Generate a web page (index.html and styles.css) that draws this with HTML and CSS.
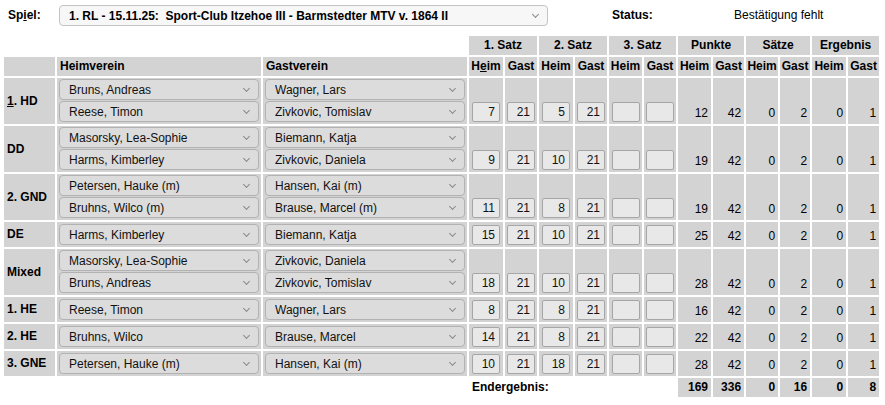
FILE: index.html
```html
<!DOCTYPE html>
<html>
	<head>
		<meta charset="utf-8">
		<title>Spielbericht</title>
		<link rel="stylesheet" href="styles.css">
	</head>
	<body>
		<div class="kopf">
			<label class="kopf-label" accesskey="i">Sp<u>i</u>el:</label>
			<span class="pick pick-spiel">
				<select>
					<option>1. RL - 15.11.25:&nbsp; Sport-Club Itzehoe III - Barmstedter MTV v. 1864 II</option>
				</select>
			</span>
			<span class="status-label">Status:</span>
			<span class="status">Bestätigung fehlt</span>
		</div>

		<table class="bericht">
			<colgroup>
				<col class="c-rang"><col class="c-name"><col class="c-name">
				<col class="c-34"><col class="c-32"><col class="c-34"><col class="c-32">
				<col class="c-33"><col class="c-32"><col class="c-33"><col class="c-31">
				<col class="c-32"><col class="c-30"><col class="c-34"><col class="c-31">
			</colgroup>
			<thead>
				<tr>
					<th colspan="3" class="leer"></th>
					<th colspan="2">1. Satz</th>
					<th colspan="2">2. Satz</th>
					<th colspan="2">3. Satz</th>
					<th colspan="2">Punkte</th>
					<th colspan="2">Sätze</th>
					<th colspan="2">Ergebnis</th>
				</tr>
				<tr>
					<th></th>
					<th class="links">Heimverein</th>
					<th class="links">Gastverein</th>
					<th>H<u>e</u>im</th><th>Gast</th>
					<th>Heim</th><th>Gast</th>
					<th>Heim</th><th>Gast</th>
					<th>Heim</th><th>Gast</th>
					<th>Heim</th><th>Gast</th>
					<th>Heim</th><th>Gast</th>
				</tr>
			</thead>
			<tbody>
				<tr class="doppel">
					<td class="rang"><u>1</u>. HD</td>
					<td class="namen">
						<span class="pick"><select><option>Bruns, Andreas</option></select></span>
						<span class="pick"><select><option>Reese, Timon</option></select></span>
					</td>
					<td class="namen">
						<span class="pick"><select><option>Wagner, Lars</option></select></span>
						<span class="pick"><select><option>Zivkovic, Tomislav</option></select></span>
					</td>
					<td class="satz"><input value="7"></td><td class="satz"><input value="21"></td>
					<td class="satz"><input value="5"></td><td class="satz"><input value="21"></td>
					<td class="satz"><input value=""></td><td class="satz"><input value=""></td>
					<td class="zahl">12</td><td class="zahl">42</td>
					<td class="zahl">0</td><td class="zahl">2</td>
					<td class="zahl">0</td><td class="zahl">1</td>
				</tr>
				<tr class="doppel">
					<td class="rang">DD</td>
					<td class="namen">
						<span class="pick"><select><option>Masorsky, Lea-Sophie</option></select></span>
						<span class="pick"><select><option>Harms, Kimberley</option></select></span>
					</td>
					<td class="namen">
						<span class="pick"><select><option>Biemann, Katja</option></select></span>
						<span class="pick"><select><option>Zivkovic, Daniela</option></select></span>
					</td>
					<td class="satz"><input value="9"></td><td class="satz"><input value="21"></td>
					<td class="satz"><input value="10"></td><td class="satz"><input value="21"></td>
					<td class="satz"><input value=""></td><td class="satz"><input value=""></td>
					<td class="zahl">19</td><td class="zahl">42</td>
					<td class="zahl">0</td><td class="zahl">2</td>
					<td class="zahl">0</td><td class="zahl">1</td>
				</tr>
				<tr class="doppel">
					<td class="rang">2. GND</td>
					<td class="namen">
						<span class="pick"><select><option>Petersen, Hauke (m)</option></select></span>
						<span class="pick"><select><option>Bruhns, Wilco (m)</option></select></span>
					</td>
					<td class="namen">
						<span class="pick"><select><option>Hansen, Kai (m)</option></select></span>
						<span class="pick"><select><option>Brause, Marcel (m)</option></select></span>
					</td>
					<td class="satz"><input value="11"></td><td class="satz"><input value="21"></td>
					<td class="satz"><input value="8"></td><td class="satz"><input value="21"></td>
					<td class="satz"><input value=""></td><td class="satz"><input value=""></td>
					<td class="zahl">19</td><td class="zahl">42</td>
					<td class="zahl">0</td><td class="zahl">2</td>
					<td class="zahl">0</td><td class="zahl">1</td>
				</tr>
				<tr>
					<td class="rang">DE</td>
					<td class="namen"><span class="pick"><select><option>Harms, Kimberley</option></select></span></td>
					<td class="namen"><span class="pick"><select><option>Biemann, Katja</option></select></span></td>
					<td class="satz"><input value="15"></td><td class="satz"><input value="21"></td>
					<td class="satz"><input value="10"></td><td class="satz"><input value="21"></td>
					<td class="satz"><input value=""></td><td class="satz"><input value=""></td>
					<td class="zahl">25</td><td class="zahl">42</td>
					<td class="zahl">0</td><td class="zahl">2</td>
					<td class="zahl">0</td><td class="zahl">1</td>
				</tr>
				<tr class="doppel">
					<td class="rang">Mixed</td>
					<td class="namen">
						<span class="pick"><select><option>Masorsky, Lea-Sophie</option></select></span>
						<span class="pick"><select><option>Bruns, Andreas</option></select></span>
					</td>
					<td class="namen">
						<span class="pick"><select><option>Zivkovic, Daniela</option></select></span>
						<span class="pick"><select><option>Zivkovic, Tomislav</option></select></span>
					</td>
					<td class="satz"><input value="18"></td><td class="satz"><input value="21"></td>
					<td class="satz"><input value="10"></td><td class="satz"><input value="21"></td>
					<td class="satz"><input value=""></td><td class="satz"><input value=""></td>
					<td class="zahl">28</td><td class="zahl">42</td>
					<td class="zahl">0</td><td class="zahl">2</td>
					<td class="zahl">0</td><td class="zahl">1</td>
				</tr>
				<tr>
					<td class="rang">1. HE</td>
					<td class="namen"><span class="pick"><select><option>Reese, Timon</option></select></span></td>
					<td class="namen"><span class="pick"><select><option>Wagner, Lars</option></select></span></td>
					<td class="satz"><input value="8"></td><td class="satz"><input value="21"></td>
					<td class="satz"><input value="8"></td><td class="satz"><input value="21"></td>
					<td class="satz"><input value=""></td><td class="satz"><input value=""></td>
					<td class="zahl">16</td><td class="zahl">42</td>
					<td class="zahl">0</td><td class="zahl">2</td>
					<td class="zahl">0</td><td class="zahl">1</td>
				</tr>
				<tr>
					<td class="rang">2. HE</td>
					<td class="namen"><span class="pick"><select><option>Bruhns, Wilco</option></select></span></td>
					<td class="namen"><span class="pick"><select><option>Brause, Marcel</option></select></span></td>
					<td class="satz"><input value="14"></td><td class="satz"><input value="21"></td>
					<td class="satz"><input value="8"></td><td class="satz"><input value="21"></td>
					<td class="satz"><input value=""></td><td class="satz"><input value=""></td>
					<td class="zahl">22</td><td class="zahl">42</td>
					<td class="zahl">0</td><td class="zahl">2</td>
					<td class="zahl">0</td><td class="zahl">1</td>
				</tr>
				<tr>
					<td class="rang">3. GNE</td>
					<td class="namen"><span class="pick"><select><option>Petersen, Hauke (m)</option></select></span></td>
					<td class="namen"><span class="pick"><select><option>Hansen, Kai (m)</option></select></span></td>
					<td class="satz"><input value="10"></td><td class="satz"><input value="21"></td>
					<td class="satz"><input value="18"></td><td class="satz"><input value="21"></td>
					<td class="satz"><input value=""></td><td class="satz"><input value=""></td>
					<td class="zahl">28</td><td class="zahl">42</td>
					<td class="zahl">0</td><td class="zahl">2</td>
					<td class="zahl">0</td><td class="zahl">1</td>
				</tr>
				<tr class="summe">
					<td colspan="3" class="leer"></td>
					<td colspan="6" class="leer end-label">Endergebnis:</td>
					<td class="zahl">169</td><td class="zahl">336</td>
					<td class="zahl">0</td><td class="zahl">16</td>
					<td class="zahl">0</td><td class="zahl">8</td>
				</tr>
			</tbody>
		</table>
	</body>
</html>
```

FILE: styles.css
```css
*{margin:0;padding:0;box-sizing:border-box;}
body{font:12px/15px "Liberation Sans",Arial,sans-serif;color:#000;background:#fff;}
u{text-decoration:underline;}

/* Kopfzeile: Spiel + Status */
.kopf{display:flex;align-items:center;padding:5px 0 0 8px;height:26px;}
.kopf-label{width:51px;font-weight:bold;}
.status-label{margin-left:64px;width:122px;font-weight:bold;}

/* Auswahlfelder */
.pick{position:relative;display:block;}
.pick::after{content:"";position:absolute;right:10px;top:7px;width:4px;height:4px;border-right:1px solid #8a8a8a;border-bottom:1px solid #8a8a8a;transform:rotate(45deg);pointer-events:none;}
.pick+.pick{margin-top:1px;}
.pick select{display:block;width:200px;height:21px;padding:0 20px 0 9px;font:12px "Liberation Sans",Arial,sans-serif;color:#111;
-webkit-appearance:none;appearance:none;background:#dcdcdc;border:1px solid #b2b2b2;border-radius:4px;outline:none;}
.pick-spiel select{width:489px;font-weight:bold;background:#f7f7f7;border-color:#c4c4c4;color:#000;}

/* Tabelle */
.bericht{table-layout:fixed;width:879px;margin:8px 0 0 2px;border-collapse:separate;border-spacing:2px;}
.bericht .c-rang{width:51px;}
.bericht .c-name{width:204px;}
.bericht .c-30{width:30px;}
.bericht .c-31{width:31px;}
.bericht .c-32{width:32px;}
.bericht .c-33{width:33px;}
.bericht .c-34{width:34px;}
.bericht th,.bericht td{background:#d3d3d3;}
.bericht th{padding:2px 1px;font-weight:bold;text-align:center;white-space:nowrap;}
.bericht th.links{text-align:left;padding-left:3px;}
.bericht .leer{background:none;}

.bericht td.rang{padding:0 3px;font-weight:bold;vertical-align:middle;white-space:nowrap;}
.bericht td.namen{padding:2px;vertical-align:top;}
.bericht tr.doppel td.namen{padding-top:1px;}
.bericht td.satz{padding:0 0 2px;vertical-align:bottom;}
.bericht td.satz input{display:block;width:28px;height:20px;margin:0 auto;padding:0 4px 0 0;text-align:right;
font:12px "Liberation Sans",Arial,sans-serif;color:#111;background:#e8e8e8;border:1px solid #a6a6a6;border-radius:2px;outline:none;}
.bericht td.zahl{padding:0 3px 3px 1px;text-align:right;vertical-align:bottom;}

.bericht tr.summe td{padding-top:2px;padding-bottom:2px;font-weight:bold;}
.bericht tr.summe td.end-label{padding-left:3px;text-align:left;}
```
